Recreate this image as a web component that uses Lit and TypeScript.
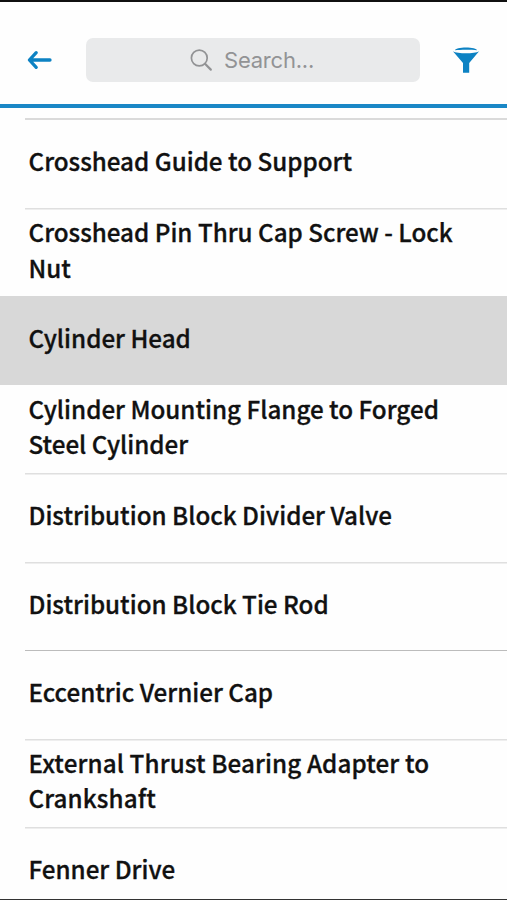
import { LitElement, html, css } from "lit";
import { customElement, property } from "lit/decorators.js";
import { classMap } from "lit/directives/class-map.js";

interface Part {
  label: string;
  selected?: boolean;
  strong?: boolean;
  bare?: boolean;
  wide?: boolean;
}

const PARTS: Part[] = [
  { label: "Crosshead Guide to Support", bare: true },
  { label: "Crosshead Pin Thru Cap Screw - Lock Nut" },
  { label: "Cylinder Head", selected: true },
  { label: "Cylinder Mounting Flange to Forged Steel Cylinder", bare: true },
  { label: "Distribution Block Divider Valve" },
  { label: "Distribution Block Tie Rod" },
  { label: "Eccentric Vernier Cap", strong: true },
  { label: "External Thrust Bearing Adapter to Crankshaft", wide: true },
  { label: "Fenner Drive" },
];

@customElement("part-row")
export class PartRow extends LitElement {
  @property({ attribute: false }) part: Part = { label: "" };

  static styles = css`
    :host { display: block; flex: none; height: 88.45px; }
    .row {
      box-sizing: border-box; height: 100%; padding: 0 40px 5.4px 28.5px;
      display: flex; align-items: center; color: #111;
      font: 500 24.2px/35.4px "Noto Sans CJK SC", "Open Sans", sans-serif;
      font-feature-settings: "liga" 1;
      -webkit-text-stroke: 0.3px #111;
      background: linear-gradient(#dfdfdf 1px, #eeeeee 1px) 25px 0 / 100% 2px no-repeat;
    }
    .strong { background: linear-gradient(#bcbcbc, #bcbcbc) 25px 0 / 100% 1px no-repeat; }
    .bare { background: none; }
    .selected { background: #d8d8d8; }
    .wide { letter-spacing: 0.12px; }
  `;

  render() {
    const { label, selected, strong, bare, wide } = this.part;
    return html`<div class=${classMap({ row: true, selected: !!selected, strong: !!strong, bare: !!bare, wide: !!wide })}>
      <span>${label}</span>
    </div>`;
  }
}

@customElement("app-root")
export class AppRoot extends LitElement {
  static styles = css`
    :host {
      display: flex; flex-direction: column; box-sizing: border-box;
      width: 100%; height: 900px; overflow: hidden; background: #fefefe;
      border-top: 2px solid #101010; border-bottom: 1px solid #333;
    }
    .bar {
      flex: none; box-sizing: border-box; height: 106px; padding: 36px 27px 0 27px;
      display: flex; align-items: flex-start; border-bottom: 4px solid #1a87c6;
    }
    .back { width: 26px; height: 44px; margin-right: 33px; }
    .search {
      width: 334px; height: 44px; border-radius: 7px; background: #e9eaeb;
      display: flex; align-items: center; color: #929395;
      font: 22px/44px Inter, sans-serif; letter-spacing: -0.22px;
    }
    .glass { width: 24px; height: 24px; margin: 0 11px 0 103px; }
    .filter { width: 28px; height: 44px; margin-left: 32px; }
    .list { display: flex; flex-direction: column; flex: 1; min-height: 0; overflow: hidden; }
    .lead { flex: none; height: 2px; margin: 9.6px 0 0 25px; background: #dadada; }
  `;

  render() {
    return html`
      <div class="bar">
        <svg class="back" viewBox="0 0 26 44" fill="none" stroke="#0d82c3" stroke-width="3.3" stroke-linecap="round" stroke-linejoin="round">
          <path d="M23 22H3.2M9.2 14.7L2.4 22L9.2 29.3" />
        </svg>
        <div class="search">
          <svg class="glass" viewBox="0 0 24 24" fill="none" stroke="#929395" stroke-linecap="round">
            <circle cx="10.3" cy="10" r="7.9" stroke-width="1.7" />
            <path d="M16 15.8L21.8 21.6" stroke-width="2.2" />
          </svg>
          <span>Search...</span>
        </div>
        <svg class="filter" viewBox="0 0 28 44" fill="#0d82c3">
          <path d="M3 12.3C2.6 8.4 25.4 8.4 25 12.3C20 11.6 8 11.6 3 12.3Z" />
          <path d="M0.9 13.2C5.5 15.9 22.5 15.9 27.1 13.2L17.2 25V34.8H11V25Z" />
        </svg>
      </div>
      <div class="list">
        <div class="lead"></div>
        ${PARTS.map((p) => html`<part-row .part=${p}></part-row>`)}
      </div>
    `;
  }
}
